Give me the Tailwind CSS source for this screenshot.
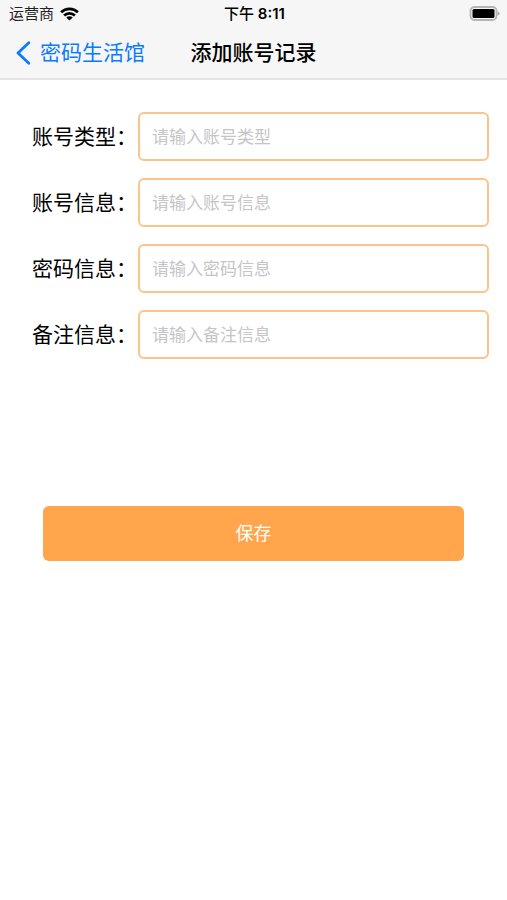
<!DOCTYPE html>
<html lang="zh-CN">
<head>
<meta charset="utf-8">
<meta name="viewport" content="width=device-width, initial-scale=1">
<title>添加账号记录</title>
<script src="https://cdn.jsdelivr.net/npm/@tailwindcss/browser@4"></script>
</head>
<body class="min-h-screen bg-white text-black font-['Inter','Noto_Sans_CJK_SC',sans-serif]">
<header class="border-b-2 border-[#e4e4e4] bg-[#f6f6f6]">
  <div class="grid h-[27px] grid-cols-[1fr_auto_1fr] items-center pr-[7px] pl-[9px]">
    <div class="flex items-center gap-[6px] text-[15px] leading-[27px] text-[#222]">
      <span>运营商</span>
      <svg class="h-[14px] w-[19px]" viewBox="0 0 19 14" fill="none" stroke="#000" stroke-width="2.7" aria-hidden="true">
        <path d="M1.1 5.3a12 12 0 0 1 16.8 0"/>
        <path d="M4.1 8.5a7.7 7.7 0 0 1 10.8 0"/>
        <path d="M9.5 13.6 6.3 10.5a4.6 4.6 0 0 1 6.4 0Z" fill="#000" stroke="none"/>
      </svg>
    </div>
    <time class="text-[15px] leading-[27px] font-semibold"><span class="font-medium">下午</span> 8:11</time>
    <svg class="h-[15px] w-[31px] justify-self-end" viewBox="0 0 31 15" aria-hidden="true">
      <rect x="1.5" y="1" width="26" height="13" rx="4" fill="#f6f6f6" stroke="#b5b5b5" stroke-width="1.8"/>
      <rect x="3.5" y="3" width="22" height="9" rx="1.5" fill="#000"/>
      <path d="M28.6 5.2q2 .8 2 2.3t-2 2.3Z" fill="#aaa"/>
    </svg>
  </div>
  <nav class="grid h-[51px] grid-cols-[1fr_auto_1fr] items-center px-4 text-[21px] leading-[30px]">
    <a href="#" class="flex items-center gap-[9px] text-[#0a7aff]">
      <svg class="h-6 w-[15px]" viewBox="0 0 15 24" fill="none" stroke="currentColor" stroke-width="2.8" stroke-linecap="round" stroke-linejoin="round" aria-hidden="true"><path d="M12.8 1.8 2 12l10.8 10.2"/></svg>
      <span>密码生活馆</span>
    </a>
    <h1 class="font-medium">添加账号记录</h1>
  </nav>
</header>
<main>
  <form>
    <div class="flex flex-col gap-[17px] pt-8 pr-[18px] pl-8">
      <div class="flex items-center">
        <label for="type" class="w-[106px] shrink-0 text-[21px] leading-[30px] whitespace-nowrap">账号类型：</label>
        <input id="type" type="text" placeholder="请输入账号类型" class="h-[49px] min-w-0 flex-1 rounded-md border-2 border-[#fdc38a] px-3 text-[17px] outline-none placeholder:text-[#c5c5c7]">
      </div>
      <div class="flex items-center">
        <label for="account" class="w-[106px] shrink-0 text-[21px] leading-[30px] whitespace-nowrap">账号信息：</label>
        <input id="account" type="text" placeholder="请输入账号信息" class="h-[49px] min-w-0 flex-1 rounded-md border-2 border-[#fdc38a] px-3 text-[17px] outline-none placeholder:text-[#c5c5c7]">
      </div>
      <div class="flex items-center">
        <label for="password" class="w-[106px] shrink-0 text-[21px] leading-[30px] whitespace-nowrap">密码信息：</label>
        <input id="password" type="text" placeholder="请输入密码信息" class="h-[49px] min-w-0 flex-1 rounded-md border-2 border-[#fdc38a] px-3 text-[17px] outline-none placeholder:text-[#c5c5c7]">
      </div>
      <div class="flex items-center">
        <label for="note" class="w-[106px] shrink-0 text-[21px] leading-[30px] whitespace-nowrap">备注信息：</label>
        <input id="note" type="text" placeholder="请输入备注信息" class="h-[49px] min-w-0 flex-1 rounded-md border-2 border-[#fdc38a] px-3 text-[17px] outline-none placeholder:text-[#c5c5c7]">
      </div>
    </div>
    <div class="px-[43px] pt-[147px]">
      <button type="button" class="h-[55px] w-full rounded-md bg-[#ffa64d] text-[18px] text-white">保存</button>
    </div>
  </form>
</main>
</body>
</html>
